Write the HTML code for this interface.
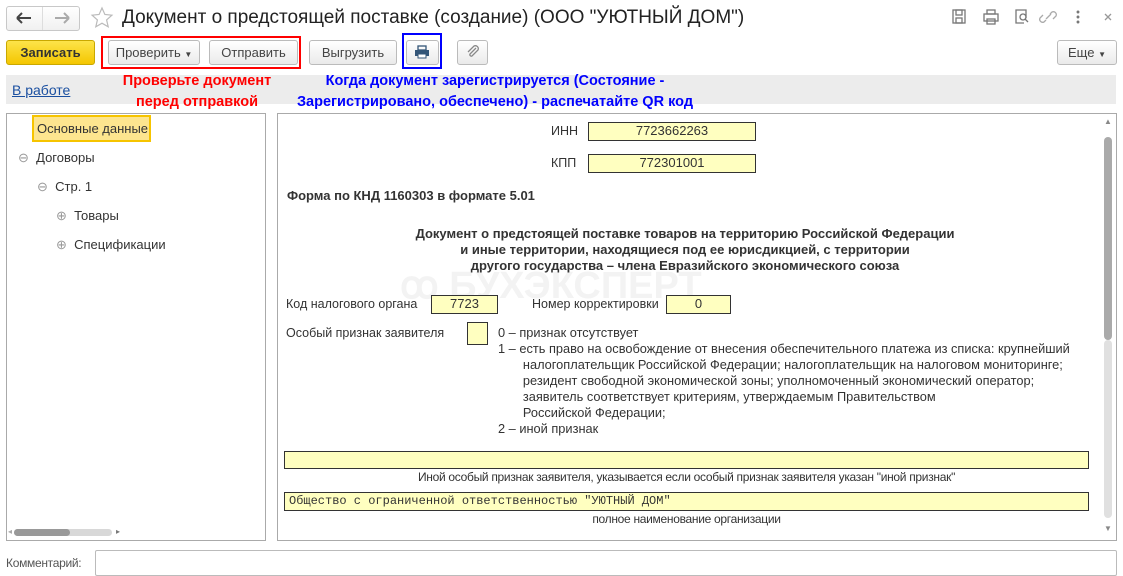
<!DOCTYPE html>
<html><head><meta charset="utf-8"><style>
*{margin:0;padding:0;box-sizing:border-box}
body{width:1123px;height:576px;background:#fff;font-family:"Liberation Sans",Arial,sans-serif;font-size:13px;color:#333;position:relative;overflow:hidden}
.a{position:absolute;white-space:nowrap}
.btn{position:absolute;height:25px;border:1px solid #bbb;border-radius:3px;background:linear-gradient(#fff,#eaeaea);text-align:center;line-height:23px;color:#444;font-size:13px}
.yb{position:absolute;background:#ffffc0;border:1px solid #333;text-align:center;font-size:13px;line-height:16px;color:#333}
.t{font-size:12.5px;color:#333}
</style></head><body>
<div class="a" style="left:6px;top:6px;width:74px;height:25px;border:1px solid #c8c8c8;border-radius:3px;background:linear-gradient(#fff,#f0f0f0)"></div>
<div class="a" style="left:42px;top:7px;width:1px;height:23px;background:#ddd"></div>
<svg class="a" style="left:14px;top:11px" width="60" height="14"><path d="M3 7h14M3 7l5-5M3 7l5 5" stroke="#444" stroke-width="2" fill="none"/><path d="M55 7H41M55 7l-5-5M55 7l-5 5" stroke="#aaa" stroke-width="2" fill="none"/></svg>
<svg class="a" style="left:90px;top:6px" width="24" height="24"><path d="M12 2l2.9 6.5 7 .7-5.3 4.7 1.6 6.9L12 17.2 5.8 20.8l1.6-6.9L2.1 9.2l7-.7z" fill="none" stroke="#bbb" stroke-width="1.2"/></svg>
<div class="a" style="left:122px;top:7px;font-size:19px;color:#222">Документ о предстоящей поставке (создание) (ООО "УЮТНЫЙ ДОМ")</div>
<svg class="a" style="left:950px;top:8px" width="170" height="18" fill="none" stroke="#777" stroke-width="1.3">
<rect x="3" y="2" width="12" height="13"/><rect x="6" y="2" width="6" height="5"/><rect x="6" y="10" width="6" height="5"/>
<rect x="34" y="6" width="14" height="7"/><rect x="37" y="2" width="8" height="4"/><rect x="37" y="11" width="8" height="5"/>
<path d="M74 15h-8V2h10v8"/><circle cx="73" cy="9" r="3"/><path d="M75 11l3 3"/>
<path d="M96 12l-2 2a3 3 0 01-4-4l3-3M100 6l2-2a3 3 0 014 4l-3 3M96 11l5-5" stroke="#aaa"/>
<circle cx="128" cy="4" r=".8" fill="#777"/><circle cx="128" cy="9" r=".8" fill="#777"/><circle cx="128" cy="14" r=".8" fill="#777"/>
<path d="M155 6l6 6M161 6l-6 6" stroke="#999"/></svg>
<div class="btn" style="left:6px;top:40px;width:89px;background:linear-gradient(#fde44a,#f4c600);border-color:#c9a800;font-weight:bold;color:#333">Записать</div>
<div class="a" style="left:101px;top:36px;width:200px;height:33px;border:2px solid #f00"></div>
<div class="btn" style="left:108px;top:40px;width:92px">Проверить <span style="font-size:8px">▼</span></div>
<div class="btn" style="left:209px;top:40px;width:89px">Отправить</div>
<div class="btn" style="left:309px;top:40px;width:88px">Выгрузить</div>
<div class="a" style="left:402px;top:33px;width:40px;height:36px;border:2px solid #00f"></div>
<div class="btn" style="left:406px;top:40px;width:33px"></div>
<svg class="a" style="left:414px;top:45px" width="16" height="14"><rect x="4" y="1" width="8" height="4" fill="none" stroke="#357" stroke-width="1.3"/><rect x="1" y="5" width="14" height="6" fill="#357"/><rect x="4" y="9" width="8" height="4" fill="#fff" stroke="#357"/></svg>
<div class="btn" style="left:457px;top:40px;width:31px"></div>
<svg class="a" style="left:465px;top:44px" width="16" height="16"><path d="M11 4l-6 6a1.5 1.5 0 002 2l6-6a3 3 0 00-4-4L3 8" fill="none" stroke="#888" stroke-width="1.3"/></svg>
<div class="btn" style="left:1057px;top:40px;width:60px">Еще <span style="font-size:8px">▼</span></div>
<div class="a" style="left:6px;top:75px;width:1110px;height:29px;background:#ececec"></div>
<div class="a" style="left:12px;top:82px;font-size:14px;color:#1a4fa0;text-decoration:underline">В работе</div>
<div class="a" style="left:110px;top:71px;width:174px;text-align:center;font-size:14.5px;font-weight:bold;color:#f00;line-height:21px">Проверьте документ<br>перед отправкой</div>
<div class="a" style="left:290px;top:71px;width:410px;text-align:center;font-size:14.5px;font-weight:bold;color:#00f;line-height:21px">Когда документ зарегистрируется (Состояние -<br>Зарегистрировано, обеспечено) - распечатайте QR код</div>
<div class="a" style="left:6px;top:113px;width:260px;height:428px;border:1px solid #aaa"></div>
<div class="a" style="left:32px;top:115px;width:119px;height:27px;background:#fde58f;border:2px solid #f6c400;font-size:13px;line-height:23px;padding-left:3px;color:#333">Основные данные</div>
<div class="a" style="left:18px;top:150px;font-size:13px;color:#333"><span style="color:#999">⊖</span>&nbsp; Договоры</div>
<div class="a" style="left:37px;top:179px;font-size:13px;color:#333"><span style="color:#999">⊖</span>&nbsp; Стр. 1</div>
<div class="a" style="left:56px;top:208px;font-size:13px;color:#333"><span style="color:#999">⊕</span>&nbsp; Товары</div>
<div class="a" style="left:56px;top:237px;font-size:13px;color:#333"><span style="color:#999">⊕</span>&nbsp; Спецификации</div>
<div class="a" style="left:14px;top:529px;width:98px;height:7px;background:#d8d8d8;border-radius:4px"></div>
<div class="a" style="left:14px;top:529px;width:56px;height:7px;background:#999;border-radius:4px"></div>
<div class="a" style="left:8px;top:527px;font-size:8px;color:#aaa">◂</div>
<div class="a" style="left:116px;top:527px;font-size:8px;color:#777">▸</div>
<div class="a" style="left:277px;top:113px;width:840px;height:428px;border:1px solid #aaa"></div>
<div class="a" style="left:1104px;top:137px;width:8px;height:203px;background:#aaa;border-radius:4px"></div>
<div class="a" style="left:1104px;top:340px;width:8px;height:178px;background:#e0e0e0;border-radius:4px"></div>
<div class="a" style="left:1104px;top:117px;font-size:8px;color:#888">▲</div>
<div class="a" style="left:1104px;top:524px;font-size:8px;color:#888">▼</div>
<div class="a" style="left:400px;top:263px;font-size:38px;font-weight:bold;color:#f3f3f3">ꝏ БУХЭКСПЕРТ</div>
<div class="a t" style="left:551px;top:124px">ИНН</div>
<div class="yb" style="left:588px;top:122px;width:168px;height:19px">7723662263</div>
<div class="a t" style="left:551px;top:156px">КПП</div>
<div class="yb" style="left:588px;top:154px;width:168px;height:19px">772301001</div>
<div class="a" style="left:287px;top:188px;font-weight:bold;font-size:13px">Форма по КНД 1160303 в формате 5.01</div>
<div class="a" style="left:385px;top:226px;width:600px;text-align:center;font-weight:bold;font-size:13px;line-height:16px">Документ о предстоящей поставке товаров на территорию Российской Федерации<br>и иные территории, находящиеся под ее юрисдикцией, с территории<br>другого государства – члена Евразийского экономического союза</div>
<div class="a t" style="left:286px;top:297px">Код налогового органа</div>
<div class="yb" style="left:431px;top:295px;width:67px;height:19px">7723</div>
<div class="a t" style="left:532px;top:297px">Номер корректировки</div>
<div class="yb" style="left:666px;top:295px;width:65px;height:19px">0</div>
<div class="a t" style="left:286px;top:326px">Особый признак заявителя</div>
<div class="yb" style="left:467px;top:322px;width:21px;height:23px"></div>
<div class="a" style="left:498px;top:325px;line-height:16px;font-size:12.8px">0 – признак отсутствует<br>1 – есть право на освобождение от внесения обеспечительного платежа из списка: крупнейший<br>&nbsp;&nbsp;&nbsp;&nbsp;&nbsp;&nbsp;&nbsp;налогоплательщик Российской Федерации; налогоплательщик на налоговом мониторинге;<br>&nbsp;&nbsp;&nbsp;&nbsp;&nbsp;&nbsp;&nbsp;резидент свободной экономической зоны; уполномоченный экономический оператор;<br>&nbsp;&nbsp;&nbsp;&nbsp;&nbsp;&nbsp;&nbsp;заявитель соответствует критериям, утверждаемым Правительством<br>&nbsp;&nbsp;&nbsp;&nbsp;&nbsp;&nbsp;&nbsp;Российской Федерации;<br>2 – иной признак</div>
<div class="yb" style="left:284px;top:451px;width:805px;height:18px"></div>
<div class="a" style="left:284px;top:470px;width:805px;text-align:center;font-size:12px;letter-spacing:-.3px">Иной особый признак заявителя, указывается если особый признак заявителя указан "иной признак"</div>
<div class="yb" style="left:284px;top:492px;width:805px;height:19px;text-align:left;padding-left:4px;font-family:'Liberation Mono',monospace;font-size:12px">Общество с ограниченной ответственностью "УЮТНЫЙ ДОМ"</div>
<div class="a" style="left:284px;top:512px;width:805px;text-align:center;font-size:12px;letter-spacing:-.3px">полное наименование организации</div>
<div class="a" style="left:6px;top:556px;font-size:12px;color:#555;letter-spacing:-.3px">Комментарий:</div>
<div class="a" style="left:95px;top:550px;width:1022px;height:26px;border:1px solid #bbb;border-radius:2px"></div>
</body></html>
